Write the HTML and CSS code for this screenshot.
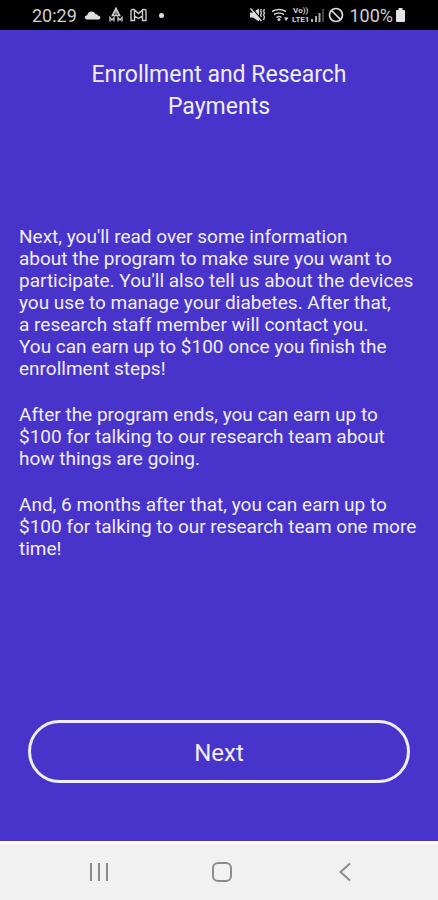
FILE: index.html
```html
<!DOCTYPE html>
<html lang="en">
<head>
  <meta charset="UTF-8" />
  <meta name="viewport" content="width=device-width, initial-scale=1.0"/>
  <title>Enrollment and Research Payments</title>
  <link rel="stylesheet" href="styles.css">
</head>
<body>
  <header class="status-bar">
    <div class="status-group">
      <span class="clock">20:29</span>
      <svg class="cloud" width="17" height="14" viewBox="0 0 17 14" aria-hidden="true">
        <path d="M3.5 11.500C1.500 11.500.7 10.300.8 9.200.9 8 2 7.200 3.200 7.200 3.600 4.800 5.400 3.400 7.500 3.400c2 0 3.500 1.100 4.100 2.900 1.300-.2 2.300.4 2.600 1.500 1.300.1 2.100.9 2.100 1.900 0 1.100-.8 1.800-2 1.800z" fill="#ddd"/>
      </svg>
      <svg class="peak" width="16" height="16" viewBox="0 0 16 16" aria-hidden="true">
        <path d="M8 1.500 4.500 8.500h7z" fill="none" stroke="#ccc" stroke-width="1.700"/>
        <path d="M8 4v4M2 14.500v-4l2 2.500 2-2.500v4M10 14.500v-4l2 2.500 2-2.500v4" fill="none" stroke="#bbb" stroke-width="1.400"/>
      </svg>
      <svg class="mail" width="17" height="14" viewBox="0 0 17 14" aria-hidden="true">
        <path d="M1 3Q1 1.500 2.500 1.500H4L8.500 5.500 13 1.500h1.500Q16 1.500 16 3v9.500h-3.500V8L8.500 10.500 4.500 8v4.500H1zM4.500 2.500V8M12.500 2.500V8" fill="none" stroke="#ccc" stroke-width="1.400"/>
      </svg>
      <span class="dot"></span>
    </div>
    <div class="status-group">
      <svg width="17" height="16" viewBox="0 0 17 16" aria-hidden="true">
        <path d="M1 5.500h3L10 1.500v13L4 10.500H1z" fill="#ddd"/>
        <path d="M2.500 1l11 12.500" stroke="#000" stroke-width="1.300"/>
        <path d="M1.500 1.500l11 12.500" stroke="#ddd" stroke-width="1.400"/>
        <path d="M12.500 2l-1 2 1 2-1 2 1 2M15.500 2l-1 2 1 2-1 2 1 2-1 3" fill="none" stroke="#ccc" stroke-width="1.400"/>
      </svg>
      <svg class="wifi" width="19" height="16" viewBox="0 0 19 16" aria-hidden="true">
        <path d="M1 4.500Q8 .5 15 4.500M3 7.500Q8 4.500 13 7.500M5.500 10.500Q8 8.500 10.500 10.500" fill="none" stroke="#ccc" stroke-width="1.500"/>
        <circle cx="8" cy="12.500" r="1.500" fill="#ccc"/>
        <path d="M13 10.500h4.500L15.200 14z" fill="#ddd"/>
      </svg>
      <span class="network"><span>Vo))</span><span>LTE1</span></span>
      <svg class="signal" width="15" height="16" viewBox="0 0 15 16" aria-hidden="true">
        <path d="M1 12h2v3H1zM5 9h2v6H5zM8.500 6h2v9h-2z" fill="#aaa"/>
        <path d="M12 2h2v13h-2z" fill="#444"/>
      </svg>
      <svg width="16" height="16" viewBox="0 0 16 16" aria-hidden="true">
        <circle cx="8" cy="8" r="6.500" fill="none" stroke="#ddd" stroke-width="1.700"/>
        <path d="M3.500 3.500l9 9" stroke="#ddd" stroke-width="1.700"/>
      </svg>
      <span class="battery-level">100%</span>
      <svg width="11" height="16" viewBox="0 0 11 16" aria-hidden="true">
        <path d="M3.500 1h4v2H9q1 0 1 1v10q0 1-1 1H2q-1 0-1-1V4q0-1 1-1h1.500z" fill="#e4e4e4"/>
      </svg>
    </div>
  </header>

  <main class="screen">
    <h1>Enrollment and Research Payments</h1>
    <div class="content">
      <p>Next, you'll read over some information<br>
        about the program to make sure you want to<br>
        participate. You'll also tell us about the devices<br>
        you use to manage your diabetes. After that,<br>
        a research staff member will contact you.<br>
        You can earn up to $100 once you finish the<br>
        enrollment steps!</p>
      <p>After the program ends, you can earn up to<br>
        $100 for talking to our research team about<br>
        how things are going.</p>
      <p>And, 6 months after that, you can earn up to<br>
        $100 for talking to our research team one more<br>
        time!</p>
    </div>
    <button class="next-btn" type="button">Next</button>
  </main>

  <nav class="nav-bar">
    <button type="button" aria-label="Recent apps">
      <svg width="24" height="24" viewBox="0 0 24 24">
        <path d="M4 3v18M12 3v18M20 3v18" stroke="#8c8c8c" stroke-width="2"/>
      </svg>
    </button>
    <button type="button" aria-label="Home">
      <svg width="24" height="24" viewBox="0 0 24 24">
        <rect x="3" y="3" width="18" height="18" rx="5" fill="none" stroke="#8c8c8c" stroke-width="2"/>
      </svg>
    </button>
    <button type="button" aria-label="Back">
      <svg width="24" height="24" viewBox="0 0 24 24">
        <path d="M17 3.500 7.500 12l9.500 8.500" fill="none" stroke="#8c8c8c" stroke-width="2"/>
      </svg>
    </button>
  </nav>
</body>
</html>
```
FILE: styles.css
```css
:root {
  --primary: #4834cb;
  --text-color: #f0edff;
  --status-color: #d0d0d0;
}

* {
  box-sizing: border-box;
  margin: 0;
  padding: 0;
}

body {
  font-family: Roboto, sans-serif;
  background: var(--primary);
  color: var(--text-color);
  min-height: 100vh;
  display: flex;
  flex-direction: column;
}

.status-bar {
  display: flex;
  justify-content: space-between;
  align-items: center;
  height: 30px;
  padding: 0 32px;
  background: #000;
  color: var(--status-color);
}

.status-group {
  display: flex;
  align-items: center;
}

.clock,
.battery-level {
  font-size: 18px;
}

.cloud {
  margin: 0 7px;
}

.mail {
  margin: 0 12px 0 6px;
}

.dot {
  width: 5px;
  height: 5px;
  border-radius: 50%;
  background: #ddd;
}

.wifi {
  margin-left: 5px;
}

.network {
  display: flex;
  flex-direction: column;
  align-items: center;
  font-size: 8px;
  font-weight: bold;
  line-height: 9px;
  margin-left: 2px;
}

.signal {
  margin: 0 3px 0 1px;
}

.battery-level {
  margin: 0 2px 0 5px;
}

.screen {
  flex: 1;
  display: flex;
  flex-direction: column;
  padding: 29px 19px 58px;
}

h1 {
  max-width: 300px;
  margin: 0 auto;
  font-size: 23px;
  font-weight: normal;
  line-height: 32px;
  text-align: center;
}

.content {
  flex: 1;
  display: flex;
  flex-direction: column;
  justify-content: center;
  gap: 24px;
  padding-bottom: 58px;
  font-size: 19px;
  line-height: 22px;
}

.next-btn {
  height: 63px;
  margin: 0 9px;
  padding-top: 2px;
  border: 3px solid var(--text-color);
  border-radius: 32px;
  background: transparent;
  color: var(--text-color);
  font-family: inherit;
  font-size: 24px;
  cursor: pointer;
}

.nav-bar {
  display: flex;
  align-items: center;
  height: 59px;
  padding: 0 32px 0 38px;
  border-top: 3px solid #fff;
  background: #f1f1f1;
}

.nav-bar button {
  flex: 1;
  height: 24px;
  border: none;
  background: transparent;
  cursor: pointer;
}
```
